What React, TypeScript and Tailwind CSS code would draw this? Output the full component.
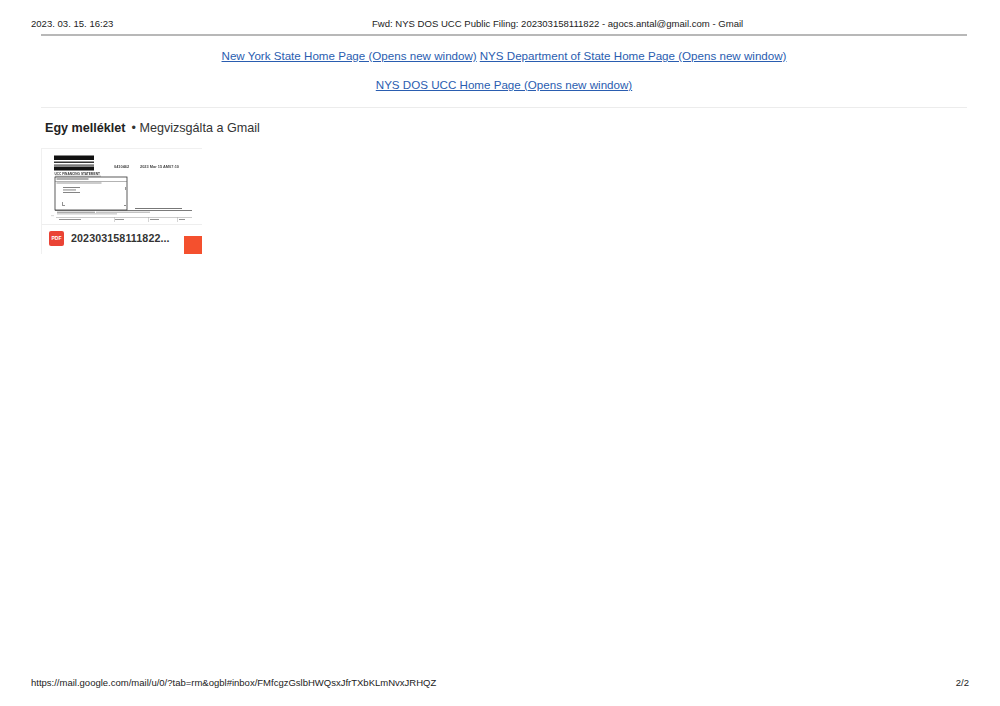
const LINKS_TOP = ["New York State Home Page (Opens new window)", "NYS Department of State Home Page (Opens new window)"];

function Thumbnail() {
  return (
    <svg width="160" height="75" viewBox="0 0 160 75" className="block" style={{ filter: "blur(0.4px)" }}>
      {/* redaction bars */}
      <rect x="12" y="6.5" width="40" height="4.5" fill="#111" />
      <rect x="12" y="12.5" width="40" height="1.5" fill="#333" />
      <rect x="12" y="15.5" width="40" height="1.2" fill="#444" />
      <rect x="12" y="17.5" width="40" height="4" fill="#111" />
      <text x="72" y="18.5" fontSize="3.9" fontWeight="700" fill="#444" fontFamily="Liberation Sans">0410462</text>
      <text x="98" y="18.5" fontSize="3.9" fontWeight="700" fill="#444" fontFamily="Liberation Sans">2023 Mar 15 AM07:10</text>
      <text x="12.5" y="25.5" fontSize="3.2" fontWeight="700" fill="#333" fontFamily="Liberation Sans">UCC FINANCING STATEMENT</text>
      <rect x="13" y="26.7" width="46" height="0.8" fill="#aaa" />
      {/* form box */}
      <rect x="13" y="28" width="72" height="33" fill="none" stroke="#333" strokeWidth="0.8" />
      <rect x="14.5" y="29.5" width="32" height="1" fill="#666" />
      <rect x="13" y="32" width="72" height="0.5" fill="#666" />
      <rect x="14.5" y="33.5" width="45" height="1" fill="#999" />
      <rect x="21" y="38" width="17" height="0.9" fill="#777" />
      <rect x="21" y="40.5" width="13" height="0.9" fill="#777" />
      <rect x="21" y="43" width="17" height="0.9" fill="#777" />
      <rect x="83" y="38" width="1.2" height="3" fill="#999" />
      <rect x="20" y="53" width="0.8" height="3" fill="#777" />
      <rect x="20" y="56" width="3" height="0.8" fill="#777" />
      <rect x="82" y="56" width="2" height="1" fill="#888" />
      {/* lower form lines */}
      <rect x="93" y="59" width="47" height="1" fill="#777" />
      <rect x="13" y="61.3" width="137" height="0.7" fill="#444" />
      <rect x="15" y="62.7" width="38" height="1" fill="#888" />
      <rect x="54" y="62.7" width="54" height="1" fill="#aaa" />
      <rect x="15" y="64.5" width="60" height="0.8" fill="#aaa" />
      <rect x="9" y="66.5" width="3" height="0.6" fill="#bbb" />
      <rect x="14" y="68" width="136" height="0.5" fill="#999" />
      <rect x="17" y="70" width="22" height="0.9" fill="#888" />
      <rect x="73" y="70" width="9" height="0.9" fill="#888" />
      <rect x="108" y="70" width="9" height="0.9" fill="#888" />
      <rect x="137" y="70" width="6" height="0.9" fill="#888" />
      <rect x="72" y="68" width="0.5" height="5" fill="#aaa" />
      <rect x="106" y="68" width="0.5" height="5" fill="#aaa" />
      <rect x="135" y="68" width="0.5" height="5" fill="#aaa" />
    </svg>
  );
}

export default function App() {
  return (
    <div className="flex h-[706px] w-[1000px] flex-col bg-white font-['Liberation_Sans',Arial,sans-serif] text-[#222]">
      {/* print header */}
      <div className="relative mt-[17px] h-[13px] px-[31px] text-[9.55px] leading-[13px]">
        <span>2023. 03. 15. 16:23</span>
        <span className="absolute left-[372px] top-0 whitespace-nowrap">
          Fwd: NYS DOS UCC Public Filing: 202303158111822 - agocs.antal@gmail.com - Gmail
        </span>
      </div>

      <main className="ml-[41px] mr-[33px] mt-[4px] flex-1 border-t-2 border-[#b8b8b8]">
        <div className="flex flex-col items-center gap-[14px] pt-[12px] text-[11.6px] leading-[15px] text-[#2a5db0]">
          <p className="flex gap-[3px]">
            {LINKS_TOP.map((label) => (
              <a key={label} href="#" className="underline">{label}</a>
            ))}
          </p>
          <p>
            <a href="#" className="underline">NYS DOS UCC Home Page (Opens new window)</a>
          </p>
        </div>

        <div className="mt-[15px] border-t border-[#ececec] pl-[4px] pt-[12px] text-[12.6px] leading-[16px]">
          <b className="font-bold">Egy melléklet</b>
          <span className="ml-[6px] text-[#333]">• Megvizsgálta a Gmail</span>
        </div>

        {/* attachment card */}
        <div className="relative mt-[12px] h-[106px] w-[161px] overflow-hidden border-l border-t border-[#f0f0f0]">
          <Thumbnail />
          <div className="flex h-[27px] items-center gap-[7px] border-t border-[#eee] pl-[7px] box-content">
            <span className="flex h-[15px] w-[15px] items-center justify-center rounded-[2px] bg-[#ea4335] text-[5px] font-bold text-white">
              PDF
            </span>
            <span className="text-[10.7px] font-bold tracking-[0.1px] text-[#333]">202303158111822...</span>
          </div>
          <div className="absolute bottom-0 right-0 h-[18px] w-[18px] bg-[#f4502e]" />
        </div>
      </main>

      {/* print footer */}
      <div className="mb-[17px] flex justify-between px-[31px] text-[9.5px] leading-[13px]">
        <span>https://mail.google.com/mail/u/0/?tab=rm&ogbl#inbox/FMfcgzGslbHWQsxJfrTXbKLmNvxJRHQZ</span>
        <span>2/2</span>
      </div>
    </div>
  );
}
